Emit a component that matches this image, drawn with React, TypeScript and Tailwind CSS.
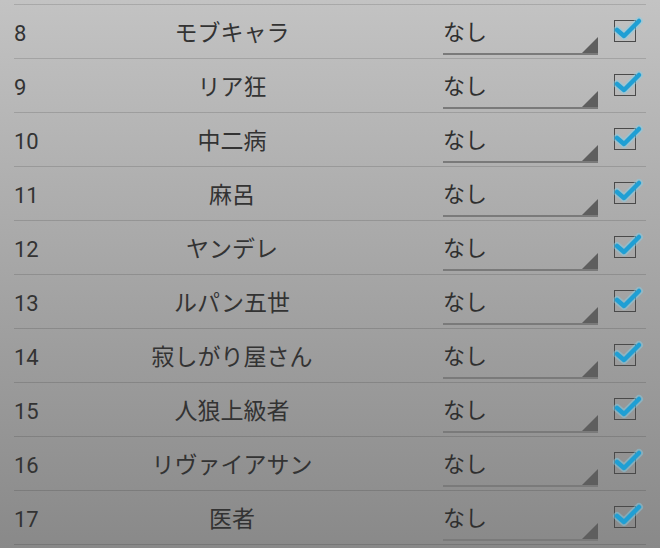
import React from 'react'

const roles = [
    { no: 8, name: 'モブキャラ' },
    { no: 9, name: 'リア狂' },
    { no: 10, name: '中二病' },
    { no: 11, name: '麻呂' },
    { no: 12, name: 'ヤンデレ' },
    { no: 13, name: 'ルパン五世' },
    { no: 14, name: '寂しがり屋さん' },
    { no: 15, name: '人狼上級者' },
    { no: 16, name: 'リヴァイアサン' },
    { no: 17, name: '医者' },
]

const CheckBox = () => (
    <div className="relative w-[22px] h-[22px] border-[1.5px] border-[#4a4a4a]">
        <svg className="absolute -top-[6px] -left-[3px] overflow-visible" width="32" height="28" viewBox="0 0 32 28">
            <path d="M5 15 L12 21 L27 6" fill="none" stroke="#7fd0ee" strokeOpacity="0.45" strokeWidth="8" strokeLinecap="round" strokeLinejoin="round" />
            <path d="M5 15 L12 21 L27 6" fill="none" stroke="#1f9fd4" strokeWidth="4.5" strokeLinecap="round" strokeLinejoin="round" />
        </svg>
    </div>
)

const Dropdown = () => (
    <div className="relative w-[155px] h-[44px] border-b-2 border-[#7a7a7a] flex items-center">
        <span className="text-[22px] leading-none text-[#2f2f2f] -mt-[4px]">なし</span>
        <div className="absolute right-0 bottom-0 w-0 h-0 border-l-[16px] border-l-transparent border-b-[16px] border-b-[#5e5e5e]" />
    </div>
)

const Row = ({ no, name }: { no: number; name: string }) => (
    <div className="h-[54px] border-b border-[#00000022] flex items-center">
        <div className="w-[60px] pt-[3px] text-[22px] text-[#333] font-['Roboto',sans-serif]">{no}</div>
        <div className="w-[316px] text-center text-[23px] text-[#333]">{name}</div>
        <div className="ml-[53px] pt-[2px]">
            <Dropdown />
        </div>
        <div className="ml-[16px] -mt-[2px]">
            <CheckBox />
        </div>
    </div>
)

export default function App() {
    return (
        <div className="w-[660px] h-[548px] overflow-hidden bg-gradient-to-b from-[#c3c3c3] to-[#898989] font-['Noto_Sans_CJK_JP','Noto_Sans',sans-serif]">
            <div className="px-[14px]">
                <div className="h-[5px] border-b border-[#00000022]" />
                {roles.map(r => (
                    <Row key={r.no} no={r.no} name={r.name} />
                ))}
            </div>
        </div>
    )
}
